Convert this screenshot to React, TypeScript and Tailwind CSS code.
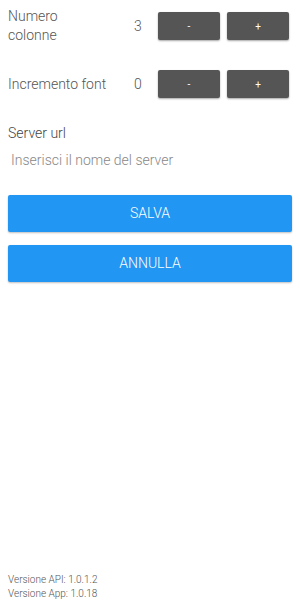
import React from 'react'

function Stepper({ label, value }: { label: React.ReactNode; value: number }) {
  return (
    <div className="flex h-[28px] items-center">
      <div className="w-[118px] text-[14px] font-light leading-[19px] text-[#555]">{label}</div>
      <div className="w-[24px] text-center text-[14px] font-light text-[#555]">{value}</div>
      <button className="ml-[8px] h-[28px] w-[62px] rounded-[2px] bg-[#555555] text-[10px] text-white shadow-[0_1px_2px_rgba(0,0,0,0.35)]">
        -
      </button>
      <button className="ml-[7px] h-[28px] w-[62px] rounded-[2px] bg-[#555555] text-[10px] text-white shadow-[0_1px_2px_rgba(0,0,0,0.35)]">
        +
      </button>
    </div>
  )
}

export default function App() {
  return (
    <div
      className="flex h-[608px] w-[300px] flex-col bg-white px-[8px]"
      style={{ fontFamily: 'Roboto, "Liberation Sans", sans-serif' }}
    >
      <div className="mt-[12px]">
        <Stepper
          label={
            <>
              Numero
              <br />
              colonne
            </>
          }
          value={3}
        />
      </div>
      <div className="mt-[30px]">
        <Stepper label="Incremento font" value={0} />
      </div>

      <div className="mt-[25px] text-[14px] font-light text-[#444]">Server url</div>
      <input
        className="mt-[4px] h-[24px] px-[3px] text-[14px] font-light text-[#333] outline-none placeholder:text-[#888]"
        placeholder="Inserisci il nome del server"
      />

      <button className="mt-[23px] h-[37px] rounded-[2px] bg-[#2196F3] text-[14px] font-light text-white shadow-[0_1px_2px_rgba(0,0,0,0.25)]">
        SALVA
      </button>
      <button className="mt-[13px] h-[37px] rounded-[2px] bg-[#2196F3] text-[14px] font-light text-white shadow-[0_1px_2px_rgba(0,0,0,0.25)]">
        ANNULLA
      </button>

      <div className="mt-auto mb-[7px] text-[10px] font-light leading-[14px] text-[#555]">
        <div>Versione API: 1.0.1.2</div>
        <div>Versione App: 1.0.18</div>
      </div>
    </div>
  )
}
